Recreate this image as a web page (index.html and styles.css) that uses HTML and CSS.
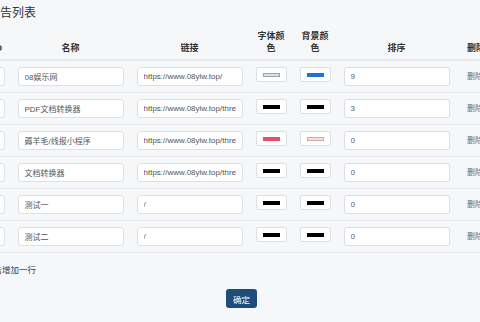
FILE: index.html
```html
<!DOCTYPE html>
<html lang="zh-CN">
<head>
    <meta charset="UTF-8">
    <title>广告列表</title>
    <link rel="stylesheet" href="styles.css">
</head>
<body>
    <div class="page">
        <h2 class="title">广告列表</h2>
        <table class="ad-table">
            <thead>
                <tr>
                    <th class="col-id">ID</th>
                    <th>名称</th>
                    <th>链接</th>
                    <th class="col-color">字体颜色</th>
                    <th class="col-color">背景颜色</th>
                    <th>排序</th>
                    <th class="col-del">删除</th>
                </tr>
            </thead>
            <tbody>
                <tr>
                    <td><input class="id-input" type="text" value="1"></td>
                    <td><input type="text" value="08娱乐网"></td>
                    <td><input type="text" value="https://www.08ylw.top/"></td>
                    <td><div class="swatch"><span class="sw-light"></span></div></td>
                    <td><div class="swatch"><span class="sw-blue"></span></div></td>
                    <td><input type="text" value="9"></td>
                    <td class="del">删除</td>
                </tr>
                <tr>
                    <td><input class="id-input" type="text" value="2"></td>
                    <td><input type="text" value="PDF文档转换器"></td>
                    <td><input type="text" value="https://www.08ylw.top/thread"></td>
                    <td><div class="swatch"><span class="sw-black"></span></div></td>
                    <td><div class="swatch"><span class="sw-black"></span></div></td>
                    <td><input type="text" value="3"></td>
                    <td class="del">删除</td>
                </tr>
                <tr>
                    <td><input class="id-input" type="text" value="3"></td>
                    <td><input type="text" value="薅羊毛/线报小程序"></td>
                    <td><input type="text" value="https://www.08ylw.top/thread"></td>
                    <td><div class="swatch"><span class="sw-red"></span></div></td>
                    <td><div class="swatch"><span class="sw-pink"></span></div></td>
                    <td><input type="text" value="0"></td>
                    <td class="del">删除</td>
                </tr>
                <tr>
                    <td><input class="id-input" type="text" value="4"></td>
                    <td><input type="text" value="文档转换器"></td>
                    <td><input type="text" value="https://www.08ylw.top/thread"></td>
                    <td><div class="swatch"><span class="sw-black"></span></div></td>
                    <td><div class="swatch"><span class="sw-black"></span></div></td>
                    <td><input type="text" value="0"></td>
                    <td class="del">删除</td>
                </tr>
                <tr>
                    <td><input class="id-input" type="text" value="5"></td>
                    <td><input type="text" value="测试一"></td>
                    <td><input type="text" value="/"></td>
                    <td><div class="swatch"><span class="sw-black"></span></div></td>
                    <td><div class="swatch"><span class="sw-black"></span></div></td>
                    <td><input type="text" value="0"></td>
                    <td class="del">删除</td>
                </tr>
                <tr>
                    <td><input class="id-input" type="text" value="6"></td>
                    <td><input type="text" value="测试二"></td>
                    <td><input type="text" value="/"></td>
                    <td><div class="swatch"><span class="sw-black"></span></div></td>
                    <td><div class="swatch"><span class="sw-black"></span></div></td>
                    <td><input type="text" value="0"></td>
                    <td class="del">删除</td>
                </tr>
            </tbody>
        </table>
        <div class="add-row">点击增加一行</div>
    </div>
    <div class="actions">
        <button class="submit-btn" type="button">确定</button>
    </div>
</body>
</html>
```

FILE: styles.css
```css
html, body {
    margin: 0;
    padding: 0;
    background: #f6f7f9;
    overflow: hidden;
}
body {
    width: 480px;
    height: 322px;
    font-family: "Liberation Sans", "Noto Sans CJK SC", sans-serif;
    color: #333;
}
.page {
    margin-left: -16px;
    width: 520px;
}
.title {
    margin: 0;
    padding: 4px 0 0 4px;
    font-size: 12px;
    line-height: 18px;
    font-weight: normal;
    color: #333;
}
.ad-table {
    border-collapse: collapse;
    margin-top: 4px;
}
.ad-table th {
    font-size: 9px;
    line-height: 12px;
    font-weight: bold;
    color: #333;
    text-align: center;
    vertical-align: bottom;
    padding: 4px 6.5px 5px;
    border-bottom: 2px solid #e4e7ec;
}
.ad-table td {
    padding: 6px 6.5px;
    border-bottom: 1px solid #e6e9ee;
    vertical-align: top;
}
.ad-table th.col-color {
    width: 31px;
}
.ad-table th.col-del,
.ad-table td.del {
    width: 26px;
    text-align: left;
    padding-left: 11px;
}
.ad-table td.del {
    font-size: 8px;
    line-height: 19px;
    color: #666;
}
input {
    box-sizing: border-box;
    display: block;
    width: 106px;
    height: 19px;
    margin: 0;
    padding: 0 6px;
    border: 1px solid #dcdfe6;
    border-radius: 3px;
    background: #fff;
    font-family: "Liberation Sans", "Noto Sans CJK SC", sans-serif;
    font-size: 8px;
    color: #555;
}
input.id-input {
    width: 14px;
}
.swatch {
    box-sizing: border-box;
    width: 31px;
    height: 15px;
    border: 1px solid #dcdfe6;
    border-radius: 2px;
    background: #fff;
    display: flex;
    align-items: center;
    justify-content: center;
}
.swatch span {
    box-sizing: border-box;
    display: block;
    width: 17px;
    height: 4px;
    border: 1px solid rgba(0, 0, 0, 0.35);
}
.sw-light { background: #d5e2f0; border-color: #9aa3ad !important; }
.sw-blue { background: #1f70dc; border-color: #1f70dc !important; }
.sw-red { background: #e8506a; border-color: #e8506a !important; }
.sw-pink { background: #f7dcdc; border-color: #d9a5a5 !important; }
.sw-black { background: #000; }
.add-row {
    margin-top: 11px;
    padding-left: 1px;
    font-size: 8.5px;
    line-height: 13px;
    color: #444;
}
.actions {
    display: flex;
    justify-content: center;
    margin-top: 12px;
}
.submit-btn {
    height: 19px;
    padding: 0 7px;
    margin-left: 3px;
    border: none;
    border-radius: 3px;
    background: #1d4d7d;
    color: #fff;
    font-family: "Liberation Sans", "Noto Sans CJK SC", sans-serif;
    font-size: 8.5px;
    cursor: pointer;
}
```
